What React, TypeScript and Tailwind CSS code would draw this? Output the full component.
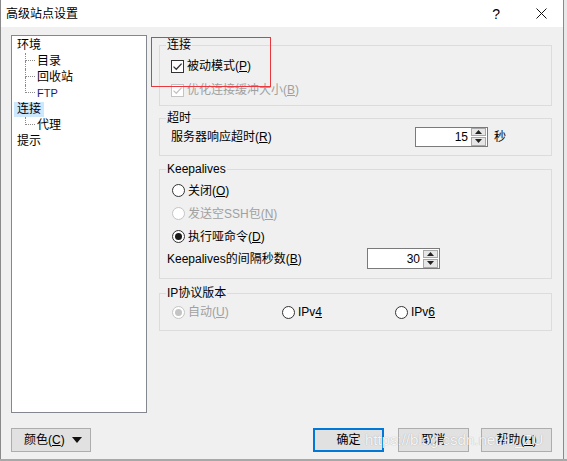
import React from "react";

const font = "font-['Liberation_Sans','Noto_Sans_CJK_SC',sans-serif]";

function Check({ disabled }: { disabled?: boolean }) {
  return (
    <span
      className={`flex h-[13px] w-[13px] shrink-0 items-center justify-center border bg-white ${
        disabled ? "border-[#c4c4c4]" : "border-[#333333]"
      }`}
    >
      <svg width="11" height="11" viewBox="0 0 11 11">
        <path
          d="M1.5 5.6 L4.3 8.3 L9.6 2.6"
          fill="none"
          stroke={disabled ? "#c4c4c4" : "#333333"}
          strokeWidth="1.3"
        />
      </svg>
    </span>
  );
}

function Radio({ on, disabled }: { on?: boolean; disabled?: boolean }) {
  return (
    <span
      className={`flex h-[13px] w-[13px] shrink-0 items-center justify-center rounded-full border bg-white ${
        disabled ? "border-[#c4c4c4]" : "border-[#333333]"
      }`}
    >
      {on && (
        <span
          className={`h-[7px] w-[7px] rounded-full ${disabled ? "bg-[#c4c4c4]" : "bg-[#1a1a1a]"}`}
        />
      )}
    </span>
  );
}

function Spin({ value, h }: { value: string; h: string }) {
  return (
    <div className={`flex w-[73px] items-center justify-end border border-[#7a7a7a] bg-white pr-[1px] ${h}`}>
      <span className="mr-[3px] text-[12px] leading-none">{value}</span>
      <div className="flex h-[18px] w-[15px] flex-col gap-[1px]">
        {[0, 1].map((i) => (
          <div
            key={i}
            className="flex flex-1 items-center justify-center border border-[#a8a8a8] bg-[#e6e6e6]"
          >
            <svg width="7" height="4" viewBox="0 0 7 4">
              <path d={i === 0 ? "M0 4 L3.5 0 L7 4 Z" : "M0 0 L3.5 4 L7 0 Z"} fill="#222" />
            </svg>
          </div>
        ))}
      </div>
    </div>
  );
}

function Group({ title, className, children }: { title: string; className: string; children: React.ReactNode }) {
  return (
    <fieldset className={`w-[393px] border border-[#dcdcdc] pl-[6px] ${className}`}>
      <legend className="px-[1px] text-[12px] leading-[16px] text-black">{title}</legend>
      {children}
    </fieldset>
  );
}

const tree = [
  { label: "环境", level: 0 },
  { label: "目录", level: 1 },
  { label: "回收站", level: 1 },
  { label: "FTP", level: 1, last: true, latin: true },
  { label: "连接", level: 0, selected: true },
  { label: "代理", level: 1, last: true },
  { label: "提示", level: 0 },
];

function Btn({ children, primary }: { children: React.ReactNode; primary?: boolean }) {
  return (
    <button
      className={`flex h-[24px] w-[71px] items-center justify-center text-[12px] ${
        primary ? "border-2 border-[#0078d7] bg-[#e1e1e1]" : "border border-[#adadad] bg-[#e1e1e1]"
      }`}
    >
      {children}
    </button>
  );
}

export default function App() {
  return (
    <div className={`relative flex h-[461px] w-[567px] flex-col bg-[#e8e8e8] text-black ${font}`}>
      <div className="flex h-[459px] w-[564px] flex-col border-x border-[#8a8a8a] bg-[#f0f0f0]">
        {/* title bar */}
        <div className="flex h-[27px] items-center bg-white">
          <span className="pl-[5px] text-[12px] leading-none">高级站点设置</span>
          <span className="ml-auto mr-[36px] text-[14px] leading-none">?</span>
          <svg className="mr-[16px]" width="11" height="11" viewBox="0 0 11 11">
            <path d="M0.5 0.5 L10.5 10.5 M10.5 0.5 L0.5 10.5" stroke="#111" strokeWidth="1" />
          </svg>
        </div>

        <div className="flex items-start">
          {/* tree */}
          <div className="ml-[10px] mt-[8px] h-[378px] w-[136px] border border-[#828790] bg-white pt-[1px]">
            {tree.map((t, i) => (
              <div key={i} className="flex h-[16px] items-center text-[12px]">
                {t.level === 0 ? (
                  <span
                    className={`ml-[2px] flex h-[15px] items-center px-[3px] leading-none ${
                      t.selected ? "bg-[#cce8ff]" : ""
                    }`}
                  >
                    {t.label}
                  </span>
                ) : (
                  <>
                    <div className="ml-[13px] flex h-[16px] w-[10px] flex-col">
                      <div className="h-[8px] border-b border-l border-dotted border-[#8a8a8a]" />
                      <div className={`h-[8px] ${t.last ? "" : "border-l border-dotted border-[#8a8a8a]"}`} />
                    </div>
                    <span className={`pl-[2px] leading-none ${t.latin ? "text-[11px] text-[#1a1a6a]" : ""}`}>
                      {t.label}
                    </span>
                  </>
                )}
              </div>
            ))}
          </div>

          {/* settings */}
          <div className="ml-[12px] mt-[10px] flex flex-col">
            <Group title="连接" className="pb-[3px]">
              <div className="pt-[1px] text-[12px]">
                <div className="flex h-[24px] items-center gap-[3px] pl-[5px]">
                  <Check />
                  <span>
                    被动模式(<u>P</u>)
                  </span>
                </div>
                <div className="flex h-[24px] items-center gap-[3px] pl-[5px] text-[#a0a0a0]">
                  <Check disabled />
                  <span>
                    优化连接缓冲大小(<u>B</u>)
                  </span>
                </div>
              </div>
            </Group>

            <Group title="超时" className="mt-[4px] pb-[9px]">
              <div className="flex h-[20px] items-center pl-[5px] pt-[1px] text-[12px]">
                <span className="w-[244px]">
                  服务器响应超时(<u>R</u>)
                </span>
                <Spin value="15" h="h-[20px]" />
                <span className="ml-[6px]">秒</span>
              </div>
            </Group>

            <Group title="Keepalives" className="mt-[5px] pb-[9px]">
              <div className="pt-[2px] text-[12px]">
                <div className="flex h-[23px] items-center gap-[3px] pl-[6px]">
                  <Radio />
                  <span>
                    关闭(<u>O</u>)
                  </span>
                </div>
                <div className="flex h-[23px] items-center gap-[3px] pl-[6px] text-[#a0a0a0]">
                  <Radio disabled />
                  <span>
                    发送空SSH包(<u>N</u>)
                  </span>
                </div>
                <div className="flex h-[23px] items-center gap-[3px] pl-[6px]">
                  <Radio on />
                  <span>
                    执行哑命令(<u>D</u>)
                  </span>
                </div>
                <div className="flex h-[21px] items-center pl-[1px]">
                  <span className="w-[200px]">
                    Keepalives的间隔秒数(<u>B</u>)
                  </span>
                  <Spin value="30" h="h-[21px]" />
                </div>
              </div>
            </Group>

            <Group title="IP协议版本" className="mt-[6px] pb-[7px]">
              <div className="flex h-[22px] items-center pl-[6px] text-[12px]">
                <div className="flex w-[110px] items-center gap-[3px] text-[#a0a0a0]">
                  <Radio on disabled />
                  <span>
                    自动(<u>U</u>)
                  </span>
                </div>
                <div className="flex w-[113px] items-center gap-[3px]">
                  <Radio />
                  <span>
                    IPv<u>4</u>
                  </span>
                </div>
                <div className="flex items-center gap-[3px]">
                  <Radio />
                  <span>
                    IPv<u>6</u>
                  </span>
                </div>
              </div>
            </Group>
          </div>
        </div>

        {/* buttons */}
        <div className="mt-[15px] flex items-center pr-[11px]">
          <button className="ml-[10px] flex h-[24px] w-[80px] items-center border border-[#adadad] bg-[#e1e1e1] text-[12px]">
            <span className="pl-[12px]">
              颜色(<u>C</u>)
            </span>
            <svg className="ml-auto mr-[8px]" width="10" height="6" viewBox="0 0 10 6">
              <path d="M0 0 L10 0 L5 6 Z" fill="#111" />
            </svg>
          </button>
          <div className="ml-auto flex">
            <Btn primary>确定</Btn>
            <div className="ml-[14px]">
              <Btn>取消</Btn>
            </div>
            <div className="ml-[12px]">
              <Btn>
                帮助(<u>H</u>)
              </Btn>
            </div>
          </div>
        </div>
      </div>
      <div className="h-[2px] w-full bg-[#a8a8a8]" />

      {/* annotation rectangle */}
      <div className="absolute left-[151px] top-[37px] h-[50px] w-[120px] border border-[#e8383d]" />
      {/* watermark */}
      <div className="pointer-events-none absolute left-[365px] top-[432px] font-['Liberation_Sans',sans-serif] text-[15px] leading-none text-white/90 [text-shadow:0_0_1px_rgba(0,0,0,0.35)]">
        https://blog.csdn.net/lu_ZU
      </div>
    </div>
  );
}
